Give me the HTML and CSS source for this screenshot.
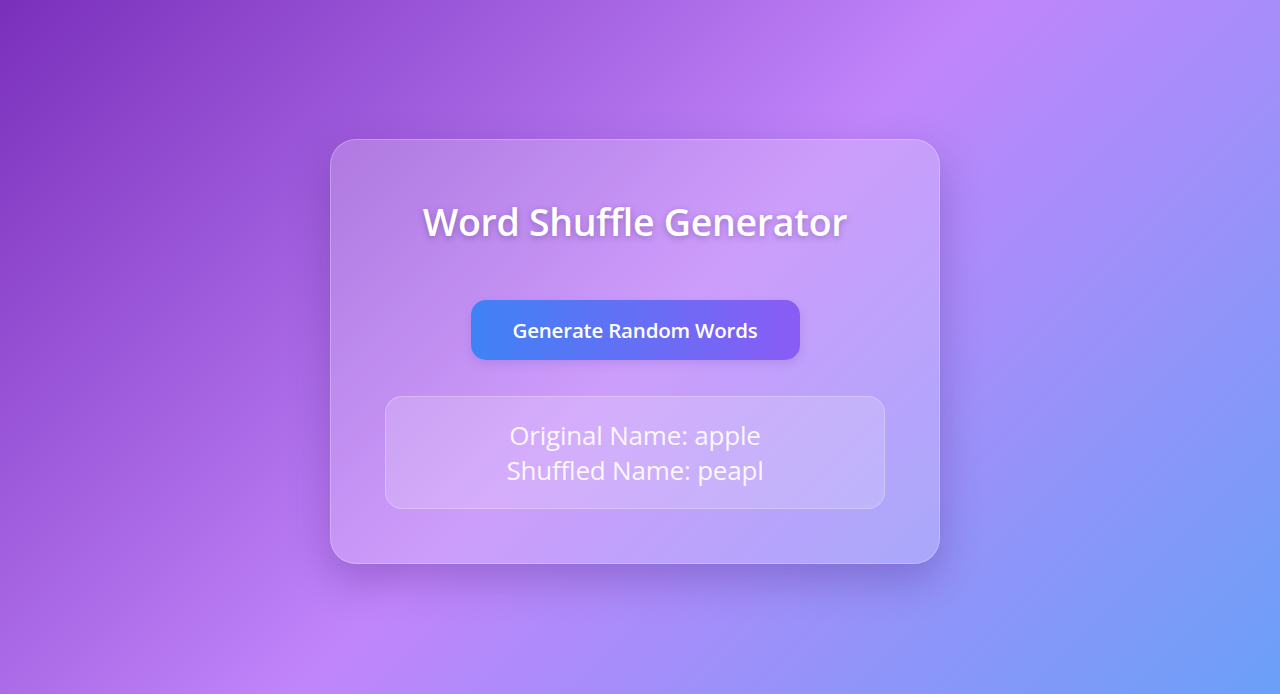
FILE: index.html
```html
<!DOCTYPE html>
<html lang="en">
<head>
<meta charset="utf-8">
<title>Word Shuffle Generator</title>
<link rel="stylesheet" href="styles.css">
</head>
<body>
<main class="page">
  <section class="card">
    <h1 class="title">Word Shuffle Generator</h1>
    <button class="generate" type="button">Generate Random Words</button>
    <div class="result">
      <p class="line">Original Name: apple</p>
      <p class="line">Shuffled Name: peapl</p>
    </div>
  </section>
</main>
</body>
</html>
```
FILE: styles.css
```css
* { box-sizing: border-box; }
html, body { margin: 0; height: 100%; }
body {
  font-family: "Open Sans", "Noto Sans", sans-serif;
  background: linear-gradient(135deg, #7a2fbb 0%, #c185fb 50%, #6aa0f8 100%);
  color: #fff;
  overflow: hidden;
}
.page {
  height: 694px;
  display: flex;
  align-items: center;
  justify-content: center;
  padding: 9px 10px 0 0;
}
.card {
  width: 610px;
  height: 425px;
  padding: 58px 55px 0;
  border-radius: 26px;
  background: rgba(255, 255, 255, 0.2);
  border: 1px solid rgba(255, 255, 255, 0.25);
  box-shadow: 0 16px 40px rgba(60, 20, 110, 0.28);
  display: flex;
  flex-direction: column;
  align-items: center;
}
.title {
  margin: 0;
  font-size: 37.5px;
  line-height: 48px;
  font-weight: 600;
  letter-spacing: -0.3px;
  text-shadow: 0 2px 6px rgba(70, 30, 120, 0.35);
}
.generate {
  margin-top: 54px;
  width: 329px;
  height: 60px;
  border: 0;
  border-radius: 15px;
  background: linear-gradient(90deg, #3f82f6, #8a5cf5);
  color: #fff;
  font-family: inherit;
  font-size: 20.5px;
  font-weight: 600;
  letter-spacing: -0.2px;
  box-shadow: 0 4px 10px rgba(80, 60, 180, 0.15);
}
.result {
  margin-top: 36px;
  width: 500px;
  height: 113px;
  padding-top: 21px;
  border-radius: 17px;
  background: rgba(255, 255, 255, 0.17);
  border: 1px solid rgba(255, 255, 255, 0.25);
  text-align: center;
}
.line {
  margin: 0;
  font-size: 26px;
  line-height: 35px;
  color: rgba(255, 255, 255, 0.92);
  letter-spacing: -0.2px;
}
```
